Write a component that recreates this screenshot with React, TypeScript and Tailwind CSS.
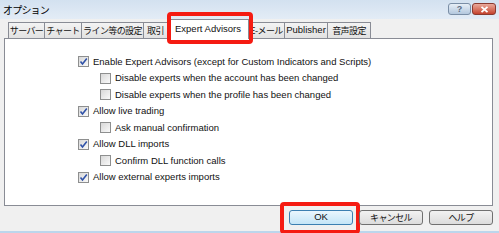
import React from "react";

const FONT = { fontFamily: '"Liberation Sans", "Noto Sans CJK JP", sans-serif' };
const JP = { fontFamily: '"Noto Sans CJK JP", sans-serif' };

const TABS: { label: string; w: number; jp: boolean }[] = [
  { label: "サーバー", w: 37, jp: true },
  { label: "チャート", w: 38, jp: true },
  { label: "ライン等の設定", w: 63, jp: true },
  { label: "取引", w: 25, jp: true },
  { label: "Expert Advisors", w: 82, jp: false },
  { label: "E-メール", w: 37, jp: true },
  { label: "Publisher", w: 44, jp: false },
  { label: "音声設定", w: 44, jp: true },
];

const OPTIONS: { label: string; checked: boolean; indent: boolean }[] = [
  { label: "Enable Expert Advisors (except for Custom Indicators and Scripts)", checked: true, indent: false },
  { label: "Disable experts when the account has been changed", checked: false, indent: true },
  { label: "Disable experts when the profile has been changed", checked: false, indent: true },
  { label: "Allow live trading", checked: true, indent: false },
  { label: "Ask manual confirmation", checked: false, indent: true },
  { label: "Allow DLL imports", checked: true, indent: false },
  { label: "Confirm DLL function calls", checked: false, indent: true },
  { label: "Allow external experts imports", checked: true, indent: false },
];

function CheckBox({ checked }: { checked: boolean }) {
  return (
    <span className="w-[11px] h-[11px] border border-[#8e8f8f] bg-gradient-to-br from-[#d8d8d8] to-[#fafafa] flex items-center justify-center shrink-0">
      {checked && (
        <svg width="9" height="9" viewBox="0 0 9 9">
          <path d="M1.5 4.5 L3.5 7 L7.8 1.5" fill="none" stroke="#3052a8" strokeWidth="1.6" />
        </svg>
      )}
    </span>
  );
}

function Tab({ label, w, jp, active }: { label: string; w: number; jp: boolean; active: boolean }) {
  if (active) {
    return (
      <div
        className="relative h-[20px] bg-white border border-b-0 border-[#898c95] -ml-px -mb-px flex items-center justify-center text-[9.5px] text-[#111] z-10 shrink-0 whitespace-nowrap"
        style={{ width: w }}
      >
        {label}
        <div className="absolute -left-px -right-[5px] -top-[8px] -bottom-[5px] border-[4px] border-[#f51b12] rounded-[4px]" />
      </div>
    );
  }
  return (
    <div
      className={`h-[16px] bg-gradient-to-b from-[#f3f3f3] to-[#e2e2e2] border border-b-0 border-[#898c95] -ml-px flex items-center justify-center text-[#111] shrink-0 whitespace-nowrap overflow-hidden ${
        jp ? "text-[9px] tracking-[-0.6px]" : "text-[9.5px]"
      }`}
      style={{ width: w, ...(jp ? JP : {}) }}
    >
      {label}
    </div>
  );
}

function Button({ label, jp, highlight }: { label: string; jp?: boolean; highlight?: boolean }) {
  return (
    <div className="relative">
      <div
        className={`w-[64px] h-[15px] rounded-[3px] border flex items-center justify-center text-[#111] bg-gradient-to-b ${
          jp ? "text-[9px] tracking-[-0.6px]" : "text-[9.5px]"
        } ${highlight ? "border-[#3c7fb1] from-[#eaf6fd] to-[#c4e5f7]" : "border-[#707070] from-[#f2f2f2] to-[#dcdcdc]"}`}
        style={jp ? JP : undefined}
      >
        {label}
      </div>
      {highlight && <div className="absolute -left-[9px] -right-[7px] -top-[8px] -bottom-[9px] border-[4px] border-[#f51b12] rounded-[4px]" />}
    </div>
  );
}

export default function App() {
  return (
    <div className="w-[499px] h-[233px] bg-[#f0f0f0] flex flex-col overflow-hidden" style={FONT}>
      <div className="h-[19px] bg-gradient-to-b from-[#d3e1f0] to-[#e3ecf6] flex items-start justify-between pl-[3px] pr-[3px] pt-[3px] shrink-0">
        <span className="text-[10px] tracking-[-0.8px] text-black leading-[13px]" style={JP}>
          オプション
        </span>
        <div className="flex gap-[1px]">
          <div className="w-[23px] h-[12px] rounded-[3px] border border-[#7a8ea6] bg-gradient-to-b from-[#e6eef6] to-[#b4c8de] flex items-center justify-center text-[9px] font-bold text-[#5a6a80] leading-none">
            ?
          </div>
          <div className="w-[24px] h-[12px] rounded-[3px] border border-[#8a3a30] bg-gradient-to-b from-[#e9a99b] to-[#c4412d] flex items-center justify-center">
            <svg width="9" height="7" viewBox="0 0 9 7">
              <path d="M1.5 0.8 L7.5 6.2 M7.5 0.8 L1.5 6.2" stroke="#ffffff" strokeWidth="1.8" />
            </svg>
          </div>
        </div>
      </div>
      <div className="flex items-end pl-[9px] h-[19px] shrink-0">
        {TABS.map((t) => (
          <Tab key={t.label} label={t.label} w={t.w} jp={t.jp} active={t.label === "Expert Advisors"} />
        ))}
      </div>
      <div className="ml-[4px] w-[489px] h-[168px] bg-white border border-[#898c95] pt-[17px] pl-[73px] flex flex-col gap-[5.5px] shrink-0">
        {OPTIONS.map((o) => (
          <div key={o.label} className={`flex items-center gap-[4px] h-[11px] text-[9.5px] text-[#111] whitespace-nowrap ${o.indent ? "pl-[22px]" : ""}`}>
            <CheckBox checked={o.checked} />
            <span className="leading-none">{o.label}</span>
          </div>
        ))}
      </div>
      <div className="flex justify-end gap-[6px] pr-[6px] pt-[4px]">
        <Button label="OK" highlight />
        <Button label="キャンセル" jp />
        <Button label="ヘルプ" jp />
      </div>
      <div className="mt-auto h-[2px] bg-[#bcd6ec]" />
    </div>
  );
}
